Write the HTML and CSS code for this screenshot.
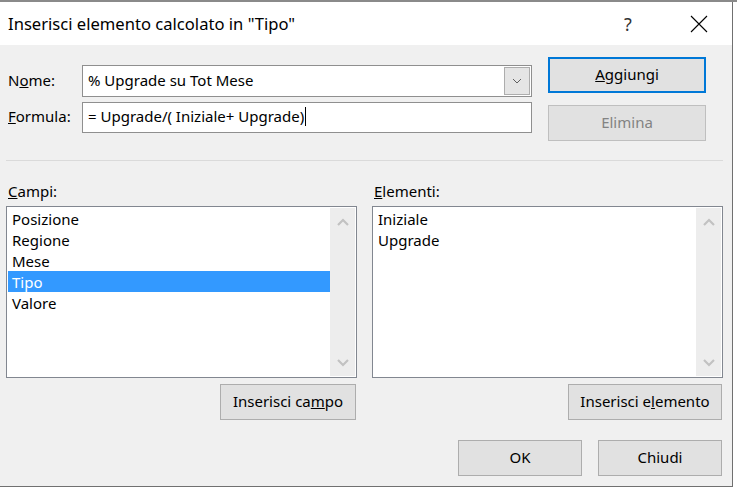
FILE: index.html
```html
<!DOCTYPE html>
<html lang="it">
<head>
    <meta charset="UTF-8">
    <meta name="viewport" content="width=device-width, initial-scale=1.0">
    <title>Inserisci elemento calcolato</title>
    <link rel="stylesheet" href="styles.css">
</head>
<body>
    <div class="sheet-top"></div>
    <div class="dialog">
        <div class="titlebar">
            <span class="title">Inserisci elemento calcolato in "Tipo"</span>
            <span class="help">?</span>
            <span class="close">
                <svg width="18" height="18" viewBox="0 0 18 18"><path d="M1 1 L17 17 M17 1 L1 17" stroke="#000" stroke-width="1.1" fill="none"/></svg>
            </span>
        </div>
        <div class="content">
            <div class="top">
                <div class="fields">
                    <div class="row">
                        <label>N<u>o</u>me:</label>
                        <div class="combo">
                            <span class="value">% Upgrade su Tot Mese</span>
                            <span class="drop">
                                <svg width="10" height="6" viewBox="0 0 10 6"><path d="M1 1 L5 5 L9 1" stroke="#606060" stroke-width="1" fill="none"/></svg>
                            </span>
                        </div>
                    </div>
                    <div class="row">
                        <label><u>F</u>ormula:</label>
                        <div class="textbox">= Upgrade/( Iniziale+ Upgrade)<span class="caret"></span></div>
                    </div>
                </div>
                <div class="side">
                    <button class="btn default"><u>A</u>ggiungi</button>
                    <button class="btn disabled">Elimina</button>
                </div>
            </div>

            <div class="sep"></div>

            <div class="lists">
                <div class="col">
                    <div class="caption"><u>C</u>ampi:</div>
                    <div class="listbox">
                        <ul class="items">
                            <li>Posizione</li>
                            <li>Regione</li>
                            <li>Mese</li>
                            <li class="selected">Tipo</li>
                            <li>Valore</li>
                        </ul>
                        <div class="scroll">
                            <svg width="12" height="8" viewBox="0 0 12 8"><path d="M1 7 L6 2 L11 7" stroke="#c2c2c2" stroke-width="2.2" fill="none"/></svg>
                            <svg width="12" height="8" viewBox="0 0 12 8"><path d="M1 1 L6 6 L11 1" stroke="#c2c2c2" stroke-width="2.2" fill="none"/></svg>
                        </div>
                    </div>
                    <div class="actions">
                        <button class="btn field-btn">Inserisci ca<u>m</u>po</button>
                    </div>
                </div>
                <div class="col">
                    <div class="caption"><u>E</u>lementi:</div>
                    <div class="listbox">
                        <ul class="items">
                            <li>Iniziale</li>
                            <li>Upgrade</li>
                        </ul>
                        <div class="scroll">
                            <svg width="12" height="8" viewBox="0 0 12 8"><path d="M1 7 L6 2 L11 7" stroke="#c2c2c2" stroke-width="2.2" fill="none"/></svg>
                            <svg width="12" height="8" viewBox="0 0 12 8"><path d="M1 1 L6 6 L11 1" stroke="#c2c2c2" stroke-width="2.2" fill="none"/></svg>
                        </div>
                    </div>
                    <div class="actions">
                        <button class="btn item-btn">Inserisci e<u>l</u>emento</button>
                    </div>
                </div>
            </div>

            <div class="footer">
                <button class="btn footer-btn">OK</button>
                <button class="btn footer-btn">Chiudi</button>
            </div>
        </div>
    </div>
</body>
</html>
```

FILE: styles.css
```css
body {
    margin: 0;
    background: #fff;
    font-family: "Noto Sans", "Open Sans", sans-serif;
    font-size: 15px;
    color: #000;
}
.sheet-top {
    height: 2px;
    background: #8a8a8a;
}
.dialog {
    width: 732px;
    height: 484px;
    border-right: 1px solid #707070;
    border-bottom: 1px solid #707070;
    background: #f0f0f0;
    box-shadow: 0 3px 0 #c4c4c4;
    display: flex;
    flex-direction: column;
}
.titlebar {
    height: 43px;
    background: #fff;
    display: flex;
    align-items: center;
}
.title {
    flex: 1;
    padding-left: 8px;
    font-size: 16.6px;
}
.help {
    width: 46px;
    text-align: center;
    font-size: 18px;
    color: #333;
}
.close {
    width: 46px;
    margin: 0 10px 0 25px;
    display: flex;
    justify-content: center;
}
.content {
    flex: 1;
    padding: 12px 9px 10px 6px;
    display: flex;
    flex-direction: column;
}
.top {
    display: flex;
    align-items: flex-start;
}
.fields {
    width: 526px;
    margin-top: 8px;
    display: flex;
    flex-direction: column;
    gap: 5px;
}
.row {
    display: flex;
    align-items: center;
}
.row label {
    width: 74px;
    padding-left: 2px;
    margin-bottom: 3px;
}
.combo {
    width: 450px;
    height: 32px;
    box-sizing: border-box;
    border: 1px solid #8f8f8f;
    background: #fff;
    padding: 1px;
    display: flex;
    align-items: center;
}
.combo .value {
    flex: 1;
    padding-left: 4px;
    margin-bottom: 3px;
}
.drop {
    width: 26px;
    height: 28px;
    box-sizing: border-box;
    background: #e5e5e5;
    border: 1px solid #adadad;
    display: flex;
    align-items: center;
    justify-content: center;
}
.textbox {
    width: 450px;
    height: 31px;
    box-sizing: border-box;
    border: 1px solid #8f8f8f;
    background: #fff;
    padding: 0 0 3px 5px;
    display: flex;
    align-items: center;
    white-space: pre;
}
.caret {
    display: inline-block;
    width: 1px;
    height: 19px;
    background: #000;
    margin-left: 1px;
}
.side {
    margin-left: 16px;
    width: 158px;
    display: flex;
    flex-direction: column;
    gap: 12px;
}
.btn {
    height: 36px;
    box-sizing: border-box;
    background: #e1e1e1;
    border: 1px solid #adadad;
    font: inherit;
    color: #000;
    padding: 0 0 3px;
}
.btn.default {
    border: 2px solid #0078d7;
}
.btn.disabled {
    border-color: #bfbfbf;
    color: #838383;
}
.sep {
    height: 1px;
    background: #dadada;
    margin-top: 19px;
}
.lists {
    display: flex;
    gap: 15px;
    margin-top: 23px;
}
.col {
    width: 351px;
    display: flex;
    flex-direction: column;
}
.caption {
    height: 20px;
    line-height: 15px;
    margin-bottom: 2px;
    padding-left: 2px;
}
.listbox {
    height: 172px;
    box-sizing: border-box;
    border: 1px solid #828790;
    background: #fff;
    padding: 1px;
    display: flex;
}
.items {
    flex: 1;
    list-style: none;
    margin: 0;
    padding: 0;
}
.items li {
    height: 21px;
    line-height: 23px;
    padding-left: 4px;
}
.items li.selected {
    background: #3399ff;
    color: #fff;
}
.scroll {
    width: 25px;
    background: #ededed;
    padding: 10px 0 9px;
    display: flex;
    flex-direction: column;
    justify-content: space-between;
    align-items: center;
}
.actions {
    display: flex;
    justify-content: flex-end;
    margin-top: 6px;
    padding-right: 1px;
}
.field-btn {
    width: 136px;
}
.item-btn {
    width: 154px;
}
.footer {
    display: flex;
    justify-content: flex-end;
    gap: 16px;
    margin-top: 20px;
    padding-right: 1px;
}
.footer-btn {
    width: 124px;
}
```
